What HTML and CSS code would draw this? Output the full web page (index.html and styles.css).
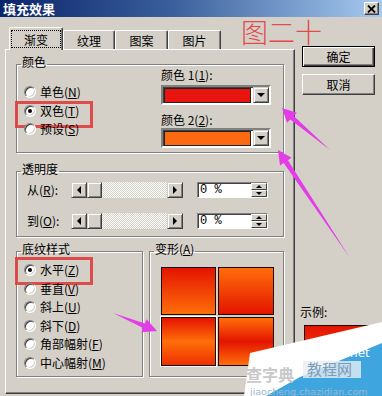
FILE: index.html
```html
<!DOCTYPE html>
<html lang="zh-CN">
<head>
  <meta charset="UTF-8" />
  <title>填充效果</title>
  <link rel="stylesheet" href="styles.css">
</head>
<body>
  <div class="window">
    <div class="titlebar">
      <span class="title">填充效果</span>
      <span class="close-btn">
        <svg width="9" height="8" viewBox="0 0 9 8"><path d="M1 0.5 L8 7.5 M8 0.5 L1 7.5" stroke="#000" stroke-width="1.8"/></svg>
      </span>
    </div>

    <div class="client">
      <div class="left">
        <div class="tabs">
          <div class="tab active"><span class="focus">渐变</span></div>
          <div class="tab">纹理</div>
          <div class="tab">图案</div>
          <div class="tab">图片</div>
        </div>

        <div class="panel">
          <fieldset class="group color-group">
            <legend>颜色</legend>
            <div class="color-body">
              <div class="radios first-radios">
                <div class="radio"><span class="circle"></span>单色(<u>N</u>)</div>
                <div class="radio marked mark-two"><span class="circle on"></span>双色(<u>T</u>)</div>
                <div class="radio"><span class="circle"></span>预设(<u>S</u>)</div>
              </div>
              <div class="colors">
                <div class="field-label">颜色 1(<u>1</u>):</div>
                <div class="combo">
                  <span class="swatch swatch-red"></span>
                  <span class="drop"><i class="tri-down"></i></span>
                </div>
                <div class="field-label second">颜色 2(<u>2</u>):</div>
                <div class="combo">
                  <span class="swatch swatch-orange"></span>
                  <span class="drop"><i class="tri-down"></i></span>
                </div>
              </div>
            </div>
          </fieldset>

          <fieldset class="group trans-group">
            <legend>透明度</legend>
            <div class="trans-body">
              <div class="trans-row">
                <span class="row-label">从(<u>R</u>):</span>
                <div class="hscroll">
                  <span class="sbtn"><i class="tri-left"></i></span>
                  <span class="thumb"></span>
                  <span class="track"></span>
                  <span class="sbtn"><i class="tri-right"></i></span>
                </div>
                <div class="spin">
                  <span class="spin-text">0 %</span>
                  <span class="spin-btns">
                    <span class="spin-btn"><i class="tri-up"></i></span>
                    <span class="spin-btn"><i class="tri-down small"></i></span>
                  </span>
                </div>
              </div>
              <div class="trans-row second">
                <span class="row-label">到(<u>O</u>):</span>
                <div class="hscroll">
                  <span class="sbtn"><i class="tri-left"></i></span>
                  <span class="thumb"></span>
                  <span class="track"></span>
                  <span class="sbtn"><i class="tri-right"></i></span>
                </div>
                <div class="spin">
                  <span class="spin-text">0 %</span>
                  <span class="spin-btns">
                    <span class="spin-btn"><i class="tri-up"></i></span>
                    <span class="spin-btn"><i class="tri-down small"></i></span>
                  </span>
                </div>
              </div>
            </div>
          </fieldset>

          <div class="bottom-row">
            <fieldset class="group style-group">
              <legend>底纹样式</legend>
              <div class="radios style-radios">
                <div class="radio marked mark-flat"><span class="circle on"></span>水平(<u>Z</u>)</div>
                <div class="radio"><span class="circle"></span>垂直(<u>V</u>)</div>
                <div class="radio"><span class="circle"></span>斜上(<u>U</u>)</div>
                <div class="radio"><span class="circle"></span>斜下(<u>D</u>)</div>
                <div class="radio"><span class="circle"></span>角部幅射(<u>F</u>)</div>
                <div class="radio"><span class="circle"></span>中心幅射(<u>M</u>)</div>
              </div>
            </fieldset>

            <fieldset class="group variant-group">
              <legend>变形(<u>A</u>)</legend>
              <div class="variants">
                <span class="tile tile-1"></span>
                <span class="tile tile-2"></span>
                <span class="tile tile-3 selected"></span>
                <span class="tile tile-4"></span>
              </div>
            </fieldset>
          </div>
        </div>
      </div>

      <div class="right">
        <div class="btn default">确定</div>
        <div class="btn">取消</div>
        <div class="sample-label">示例:</div>
        <div class="sample"></div>
      </div>
    </div>

    <div class="caption">图二十</div>

    <svg class="marks" width="382" height="396" viewBox="0 0 382 396">
      <g fill="#e23de6">
        <polygon points="282,108 296.9,112.8 293.8,116 330,150 290.3,119.6 287.1,122.8"/>
        <polygon points="278,150 291.6,157.7 287.9,160.2 350,258 283.7,163 280,165.5"/>
        <polygon points="157,331 146.6,319.2 144.9,323.4 113,313 143.1,328 141.4,332.2"/>
      </g>
      <polygon fill="#ffffff" points="244,396 250,353 382,322 382,396"/>
      <polygon fill="#3fa5df" points="266,396 300,377 382,343 382,396"/>
      <text x="320" y="357" class="wm-small">jb51.net</text>
      <rect x="303" y="361" width="58" height="17" fill="#e6eef4" opacity="0.8"/>
      <text x="307" y="375" class="wm-mid">教程网</text>
      <text x="246" y="381" class="wm-big">查字典</text>
      <text x="250" y="395" class="wm-url">jiaocheng.chazidian.com</text>
    </svg>
  </div>
</body>
</html>
```

FILE: styles.css
```css
:root {
  --face: #d4d0c8;
  --light: #ffffff;
  --shadow: #808080;
  --dark: #404040;
  --red: #e81410;
  --orange: #fb6a12;
}

* {
  box-sizing: border-box;
}

body {
  margin: 0;
  background: var(--face);
  font: 12px/14px "Noto Sans CJK SC", "Noto Sans", sans-serif;
  color: #000;
}

u {
  text-decoration: underline;
  text-underline-offset: 1px;
}

.window {
  position: relative;
  width: 382px;
  height: 396px;
  overflow: hidden;
  background: var(--face);
}

/* title bar */
.titlebar {
  height: 17px;
  display: flex;
  align-items: center;
  justify-content: space-between;
  padding: 0 3px 0 3px;
  background: linear-gradient(to right, #0a246a 0%, #3b5f9c 45%, #a6caf0 100%);
}

.title {
  color: #fff;
  font-weight: bold;
  font-size: 13px;
  line-height: 17px;
}

.close-btn {
  width: 15px;
  height: 13px;
  display: flex;
  align-items: center;
  justify-content: center;
  background: var(--face);
  border: 1px solid;
  border-color: var(--light) var(--dark) var(--dark) var(--light);
  box-shadow: inset -1px -1px 0 var(--shadow);
}

.client {
  display: flex;
}

.left {
  margin-left: 5px;
  width: 290px;
}

/* tabs */
.tabs {
  display: flex;
  align-items: flex-end;
  height: 22px;
  margin-top: 10px;
  padding-left: 4px;
}

.tab {
  position: relative;
  height: 19px;
  padding-top: 3px;
  text-align: center;
  background: var(--face);
  border: 1px solid var(--light);
  border-right-color: var(--dark);
  border-bottom: none;
  border-radius: 2px 2px 0 0;
  box-shadow: inset -1px 0 0 var(--shadow);
}

.tab:nth-child(1) { width: 54px; }
.tab:nth-child(2) { width: 52px; }
.tab:nth-child(3) { width: 53px; }
.tab:nth-child(4) { width: 53px; }

.tab.active {
  z-index: 1;
  height: 23px;
  margin-bottom: -1px;
  padding-top: 2px;
}

.focus {
  display: block;
  margin: 0 1px;
  padding-top: 1px;
  height: 18px;
  line-height: 15px;
  border: 1px dotted #000;
}

/* tab page */
.panel {
  height: 345px;
  padding: 5px 0 0 10px;
  border: 1px solid var(--light);
  border-right-color: var(--dark);
  border-bottom-color: var(--dark);
  box-shadow: inset -1px -1px 0 var(--shadow);
}

.group {
  margin: 0;
  padding: 0;
  min-width: 0;
  border: 1px solid var(--shadow);
  box-shadow: inset 1px 1px 0 var(--light), 1px 1px 0 var(--light);
}

.group legend {
  margin-left: 4px;
  padding: 0 1px 4px;
  line-height: 14px;
}

.color-group,
.trans-group {
  width: 268px;
}

.color-body {
  display: flex;
  padding: 0 12px 4px 7px;
}

.radios {
  width: 137px;
}

.first-radios {
  padding-top: 10px;
}

.radio {
  position: relative;
  display: flex;
  align-items: center;
  height: 18.5px;
  white-space: nowrap;
}

.circle {
  position: relative;
  width: 12px;
  height: 12px;
  margin-right: 4px;
  flex: none;
  border-radius: 50%;
  background: #fff;
  border: 1px solid;
  border-color: var(--shadow) var(--light) var(--light) var(--shadow);
  box-shadow: inset 1px 1px 0 var(--dark), inset -1px -1px 0 var(--face);
}

.circle.on::after {
  content: "";
  position: absolute;
  left: 3px;
  top: 3px;
  width: 4px;
  height: 4px;
  border-radius: 50%;
  background: #000;
}

/* red annotation boxes drawn over the options */
.marked::after {
  content: "";
  position: absolute;
  left: -9px;
  width: 72px;
  border: 3px solid rgba(222, 60, 60, 0.9);
}

.mark-two::after {
  top: -1px;
  height: 21px;
}

.mark-flat::after {
  top: -4px;
  height: 22px;
}

.colors {
  width: 110px;
  margin-top: -6px;
}

.field-label {
  line-height: 16px;
  white-space: nowrap;
}

.field-label.second {
  margin-top: 7px;
}

.combo {
  display: flex;
  height: 20px;
  margin-top: 2px;
  background: #fff;
  border: 2px solid;
  border-color: var(--shadow) var(--light) var(--light) var(--shadow);
  box-shadow: inset 1px 1px 0 var(--dark);
}

.field-label.second + .combo {
  margin-top: 0;
}

.swatch {
  flex: 1;
  margin: 1px 2px 0 1px;
  border: 1px solid #222;
}

.swatch-red { background: var(--red); }
.swatch-orange { background: var(--orange); }

.drop {
  width: 16px;
  display: flex;
  align-items: center;
  justify-content: center;
  background: var(--face);
  border: 1px solid;
  border-color: var(--face) var(--dark) var(--dark) var(--face);
  box-shadow: inset 1px 1px 0 var(--light), inset -1px -1px 0 var(--shadow);
}

.tri-down,
.tri-up,
.tri-left,
.tri-right {
  display: block;
  width: 0;
  height: 0;
  border: 4px solid transparent;
}

.tri-down { border-top-color: #000; border-bottom: none; }
.tri-up { border-bottom-color: #000; border-top: none; }
.tri-left { border-right-color: #000; border-left: none; }
.tri-right { border-left-color: #000; border-right: none; }

.tri-up,
.tri-down.small {
  border-width: 3px;
}

.tri-up { border-top: none; }
.tri-down.small { border-bottom: none; }

/* transparency */
.trans-group {
  margin-top: 9px;
}

.trans-body {
  padding: 2px 15px 7px 10px;
}

.trans-row {
  display: flex;
  align-items: center;
  height: 16px;
}

.trans-row.second {
  margin-top: 15px;
}

.row-label {
  width: 44px;
  white-space: nowrap;
}

.hscroll {
  display: flex;
  width: 112px;
  height: 16px;
}

.sbtn,
.thumb {
  width: 16px;
  display: flex;
  align-items: center;
  justify-content: center;
  background: var(--face);
  border: 1px solid;
  border-color: var(--face) var(--dark) var(--dark) var(--face);
  box-shadow: inset 1px 1px 0 var(--light), inset -1px -1px 0 var(--shadow);
}

.thumb {
  width: 15px;
}

.track {
  flex: 1;
  background: repeating-conic-gradient(#fff 0 25%, var(--face) 0 50%) 0 0 / 2px 2px;
}

.spin {
  display: flex;
  width: 71px;
  height: 16px;
  margin-left: 14px;
  background: #fff;
  border: 1px solid;
  border-color: var(--shadow) var(--light) var(--light) var(--shadow);
  box-shadow: inset 1px 1px 0 var(--dark);
}

.spin-text {
  flex: 1;
  padding-left: 2px;
  line-height: 14px;
  font-family: "Liberation Mono", monospace;
  font-size: 12px;
}

.spin-btns {
  display: flex;
  flex-direction: column;
  width: 16px;
}

.spin-btn {
  flex: 1;
  display: flex;
  align-items: center;
  justify-content: center;
  background: var(--face);
  border: 1px solid;
  border-color: var(--light) var(--dark) var(--dark) var(--light);
}

/* bottom groups */
.bottom-row {
  display: flex;
  gap: 6px;
  margin-top: 5px;
  width: 268px;
}

.style-group {
  width: 127px;
}

.style-radios {
  width: auto;
  padding: 1px 0 4px 7px;
}

.variant-group {
  width: 135px;
}

.variants {
  display: grid;
  grid-template-columns: 55px 56px;
  grid-template-rows: 48px 49px;
  gap: 2px;
  padding: 7px 0 10px 11px;
}

.tile {
  border: 1px solid #1a0a00;
}

.tile-1 { background: linear-gradient(#e41400, #ff6e0a); }
.tile-2 { background: linear-gradient(#ff6e0a, #e41400); }
.tile-3 { background: linear-gradient(#e41400, #ff6e0a 50%, #ee3000); }
.tile-4 { background: linear-gradient(#ff6e0a, #e41400 50%, #ff6e0a); }

.tile.selected {
  box-shadow: 0 0 0 1px #fff;
}

/* right column */
.right {
  display: flex;
  flex-direction: column;
  margin-left: 7px;
  padding-top: 29px;
}

.btn {
  width: 73px;
  height: 21px;
  line-height: 19px;
  text-align: center;
  background: var(--face);
  border: 1px solid;
  border-color: var(--light) var(--dark) var(--dark) var(--light);
  box-shadow: inset -1px -1px 0 var(--shadow);
}

.btn.default {
  border: 1px solid #000;
  box-shadow: inset 1px 1px 0 var(--light), inset -1px -1px 0 var(--dark), inset -2px -2px 0 var(--shadow);
}

.btn + .btn {
  margin-top: 7px;
}

.sample-label {
  margin: 210px 0 0 -2px;
}

.sample {
  width: 68px;
  height: 66px;
  margin: 6px 0 0 2px;
  border: 1px solid #200800;
  background: linear-gradient(#e41400, #ff6e0a);
}

/* overlay annotations */
.caption {
  position: absolute;
  left: 241px;
  top: 16px;
  font-size: 27px;
  line-height: 31px;
  font-weight: 200;
  color: #e24a4a;
}

.marks {
  position: absolute;
  left: 0;
  top: 0;
  pointer-events: none;
}

.wm-small {
  fill: #fff;
  font: 12px "DejaVu Sans", sans-serif;
}

.wm-mid {
  fill: #7d9cb8;
  font: 15px "Noto Sans CJK SC", sans-serif;
}

.wm-big {
  fill: #c8c8c8;
  font: bold 16px "Noto Sans CJK SC", sans-serif;
}

.wm-url {
  fill: #9ab8d0;
  font: 9.5px "DejaVu Sans", sans-serif;
}
```
